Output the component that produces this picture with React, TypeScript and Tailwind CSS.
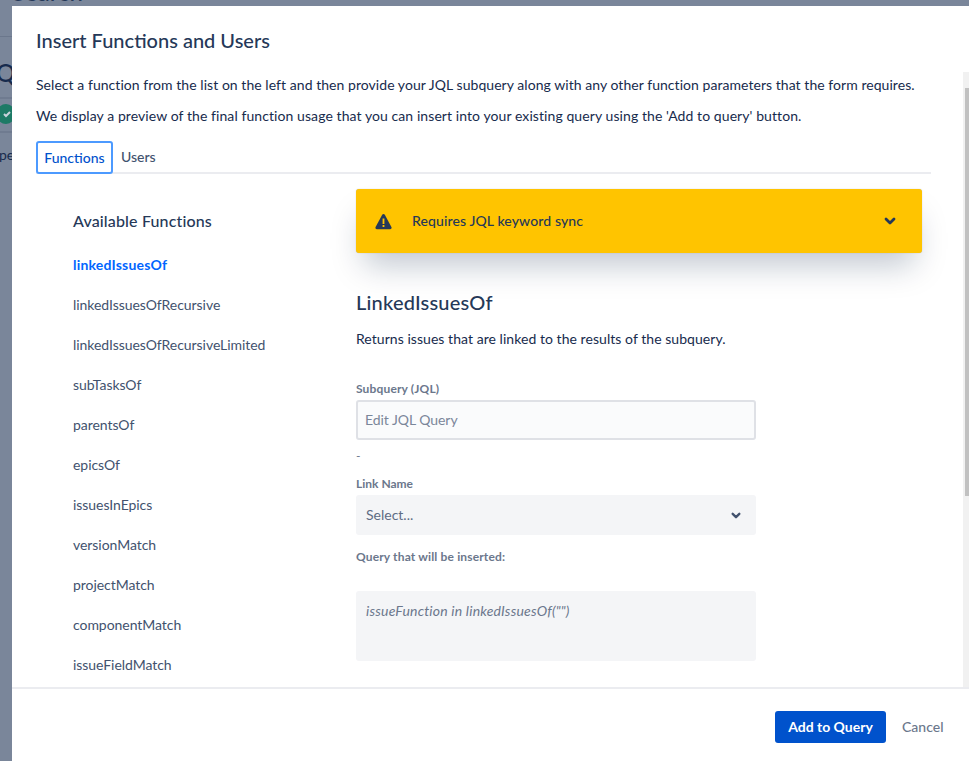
const functions = [
  'linkedIssuesOf',
  'linkedIssuesOfRecursive',
  'linkedIssuesOfRecursiveLimited',
  'subTasksOf',
  'parentsOf',
  'epicsOf',
  'issuesInEpics',
  'versionMatch',
  'projectMatch',
  'componentMatch',
  'issueFieldMatch',
]

function Chevron({ className }: { className: string }) {
  return (
    <svg className={className} viewBox="0 0 12 8" fill="none" stroke="currentColor" strokeWidth="2.8" strokeLinecap="round" strokeLinejoin="round">
      <path d="M2 2l4 4 4-4" />
    </svg>
  )
}

function Backdrop() {
  return (
    <div className="absolute inset-0 overflow-hidden bg-[#7a869a] text-[#172b4d]">
      <div className="absolute left-[12px] top-[-22px] whitespace-nowrap text-[24px] font-medium leading-[28px] text-[#253858]">Search</div>
      <div className="absolute left-0 right-0 top-[36px] h-px bg-[#6b778c]" />
      <div className="absolute left-[-4px] top-[58px] text-[24px] font-medium leading-[30px] text-[#172b4d]">Q</div>
      <div className="absolute left-0 right-0 top-[97px] h-[2px] bg-[#6f7b90]" />
      <div className="absolute left-[-3px] top-[104px] flex h-[20px] w-[18px] items-center justify-center rounded-full bg-[#1d7a66]">
        <svg className="ml-[2px] h-[10px] w-[10px]" viewBox="0 0 10 10" fill="none" stroke="#c9d2dc" strokeWidth="2">
          <path d="M2 5l2 2 4-4" />
        </svg>
      </div>
      <div className="absolute left-0 right-0 top-[131px] h-[2px] bg-[#6f7b90]" />
      <div className="absolute left-[-1px] top-[146px] text-[14px] leading-[18px]">pe</div>
    </div>
  )
}

export default function App() {
  return (
    <div className="relative h-[761px] w-[969px] overflow-hidden font-['Lato',sans-serif] text-[14px] text-[#172b4d]">
      <Backdrop />

      <div className="absolute bottom-0 left-[12px] right-0 top-[6px] flex flex-col bg-white">
        <div className="relative min-h-0 flex-1 overflow-hidden">
          <div className="pl-[24px] pr-[32px]">
            <h1 className="pt-[20px] text-[20px] font-medium leading-[28px] text-[#253858]">Insert Functions and Users</h1>
            <p className="mt-[21px] whitespace-nowrap text-[14px] leading-[20px] tracking-[0.05px]">
              Select a function from the list on the left and then provide your JQL subquery along with any other function parameters that the form requires.
            </p>
            <p className="mt-[11px] whitespace-nowrap text-[14px] leading-[20px] tracking-[0.08px]">
              We display a preview of the final function usage that you can insert into your existing query using the 'Add to query' button.
            </p>

            <div className="mt-[15px] flex w-[895px] border-b-2 border-[#ebecf0]">
              <div className="mb-[-2px] flex h-[33px] w-[77px] items-center justify-center rounded-[3px] border-2 border-[#4c9aff] font-medium text-[#0052cc]">
                Functions
              </div>
              <div className="ml-[8px] flex h-[31px] items-center font-medium text-[#42526e]">Users</div>
            </div>

            <div className="mt-[15px] flex">
              <div className="w-[320px] pl-[37px] pt-[20px]">
                <h2 className="text-[16px] font-medium leading-[24px] tracking-[0.15px] text-[#253858]">Available Functions</h2>
                <ul className="mt-[11px]">
                  {functions.map((name, i) => (
                    <li key={name} className={`flex h-[40px] items-center whitespace-nowrap ${i === 0 ? 'font-bold tracking-[0.2px] text-[#0065ff]' : 'tracking-[-0.05px] text-[#42526e]'}`}>
                      {name}
                    </li>
                  ))}
                </ul>
              </div>

              <div className="w-[566px]">
                <div className="flex h-[64px] items-center rounded-[3px] bg-[#ffc400] pl-[19px] pr-[26px] shadow-[0_20px_32px_-8px_rgba(9,30,66,0.25),0_0_1px_rgba(9,30,66,0.31)]">
                  <svg className="h-[17px] w-[17px] shrink-0" viewBox="0 0 17 16">
                    <path d="M7.2 1.2a1.5 1.5 0 012.6 0l6.6 12.4a1.5 1.5 0 01-1.3 2.2H1.9a1.5 1.5 0 01-1.3-2.2z" fill="#253858" />
                    <path d="M7.6 5h1.8v5.4H7.6zM7.6 11.6h1.8v1.8H7.6z" fill="#ffc400" />
                  </svg>
                  <span className="ml-[20px] flex-1 pb-[2px] font-medium tracking-[0.12px] text-[#253858]">Requires JQL keyword sync</span>
                  <Chevron className="h-[8px] w-[12px] text-[#253858]" />
                </div>

                <h3 className="mt-[35px] text-[20px] font-medium leading-[28px] tracking-[0.2px] text-[#253858]">LinkedIssuesOf</h3>
                <p className="mt-[13px] leading-[20px] tracking-[0.05px]">Returns issues that are linked to the results of the subquery.</p>

                <div className="w-[400px]">
                  <label className="mt-[32px] block text-[12px] font-bold leading-[16px] tracking-[0.15px] text-[#6b778c]">Subquery (JQL)</label>
                  <div className="mt-[3px] flex h-[40px] items-center rounded-[3px] border-2 border-[#dfe1e6] bg-[#fafbfc] pb-[2px] pl-[7px] tracking-[-0.05px] text-[#7a869a]">
                    Edit JQL Query
                  </div>
                  <div className="mt-[6px] h-[20px] text-[12px] leading-[20px] text-[#6b778c]">-</div>
                  <label className="mt-[10px] block text-[12px] font-bold leading-[16px] text-[#6b778c]">Link Name</label>
                  <div className="mt-[3px] flex h-[40px] items-center justify-between rounded-[3px] bg-[#f4f5f7] pl-[10px] pr-[15px] text-[#5e6c84]">
                    <span className="pb-[2px]">Select...</span>
                    <Chevron className="h-[7px] w-[10px] text-[#42526e]" />
                  </div>
                  <label className="mt-[14px] block text-[12px] font-bold leading-[16px] tracking-[0.15px] text-[#6b778c]">Query that will be inserted:</label>
                  <div className="mt-[26px] h-[70px] rounded-[3px] bg-[#f4f5f7] pl-[10px] pt-[10px] italic leading-[20px] tracking-[0.2px] text-[#6b778c]">
                    issueFunction in linkedIssuesOf("")
                  </div>
                </div>
              </div>
            </div>
          </div>

          <div className="absolute bottom-0 right-0 top-[66px] w-[6px] bg-[#f1f1f1]">
            <div className="ml-[2px] mt-[16px] h-[408px] w-[4px] bg-[#c1c1c1]" />
          </div>
        </div>

        <div className="flex h-[74px] shrink-0 items-start border-t-2 border-[#ebecf0] pl-[763px] pt-[22px]">
          <button className="h-[32px] w-[111px] rounded-[3px] bg-[#0052cc] pb-[2px] font-bold text-white">Add to Query</button>
          <button className="ml-[16px] h-[32px] pb-[2px] font-medium text-[#6b778c]">Cancel</button>
        </div>
      </div>
    </div>
  )
}
